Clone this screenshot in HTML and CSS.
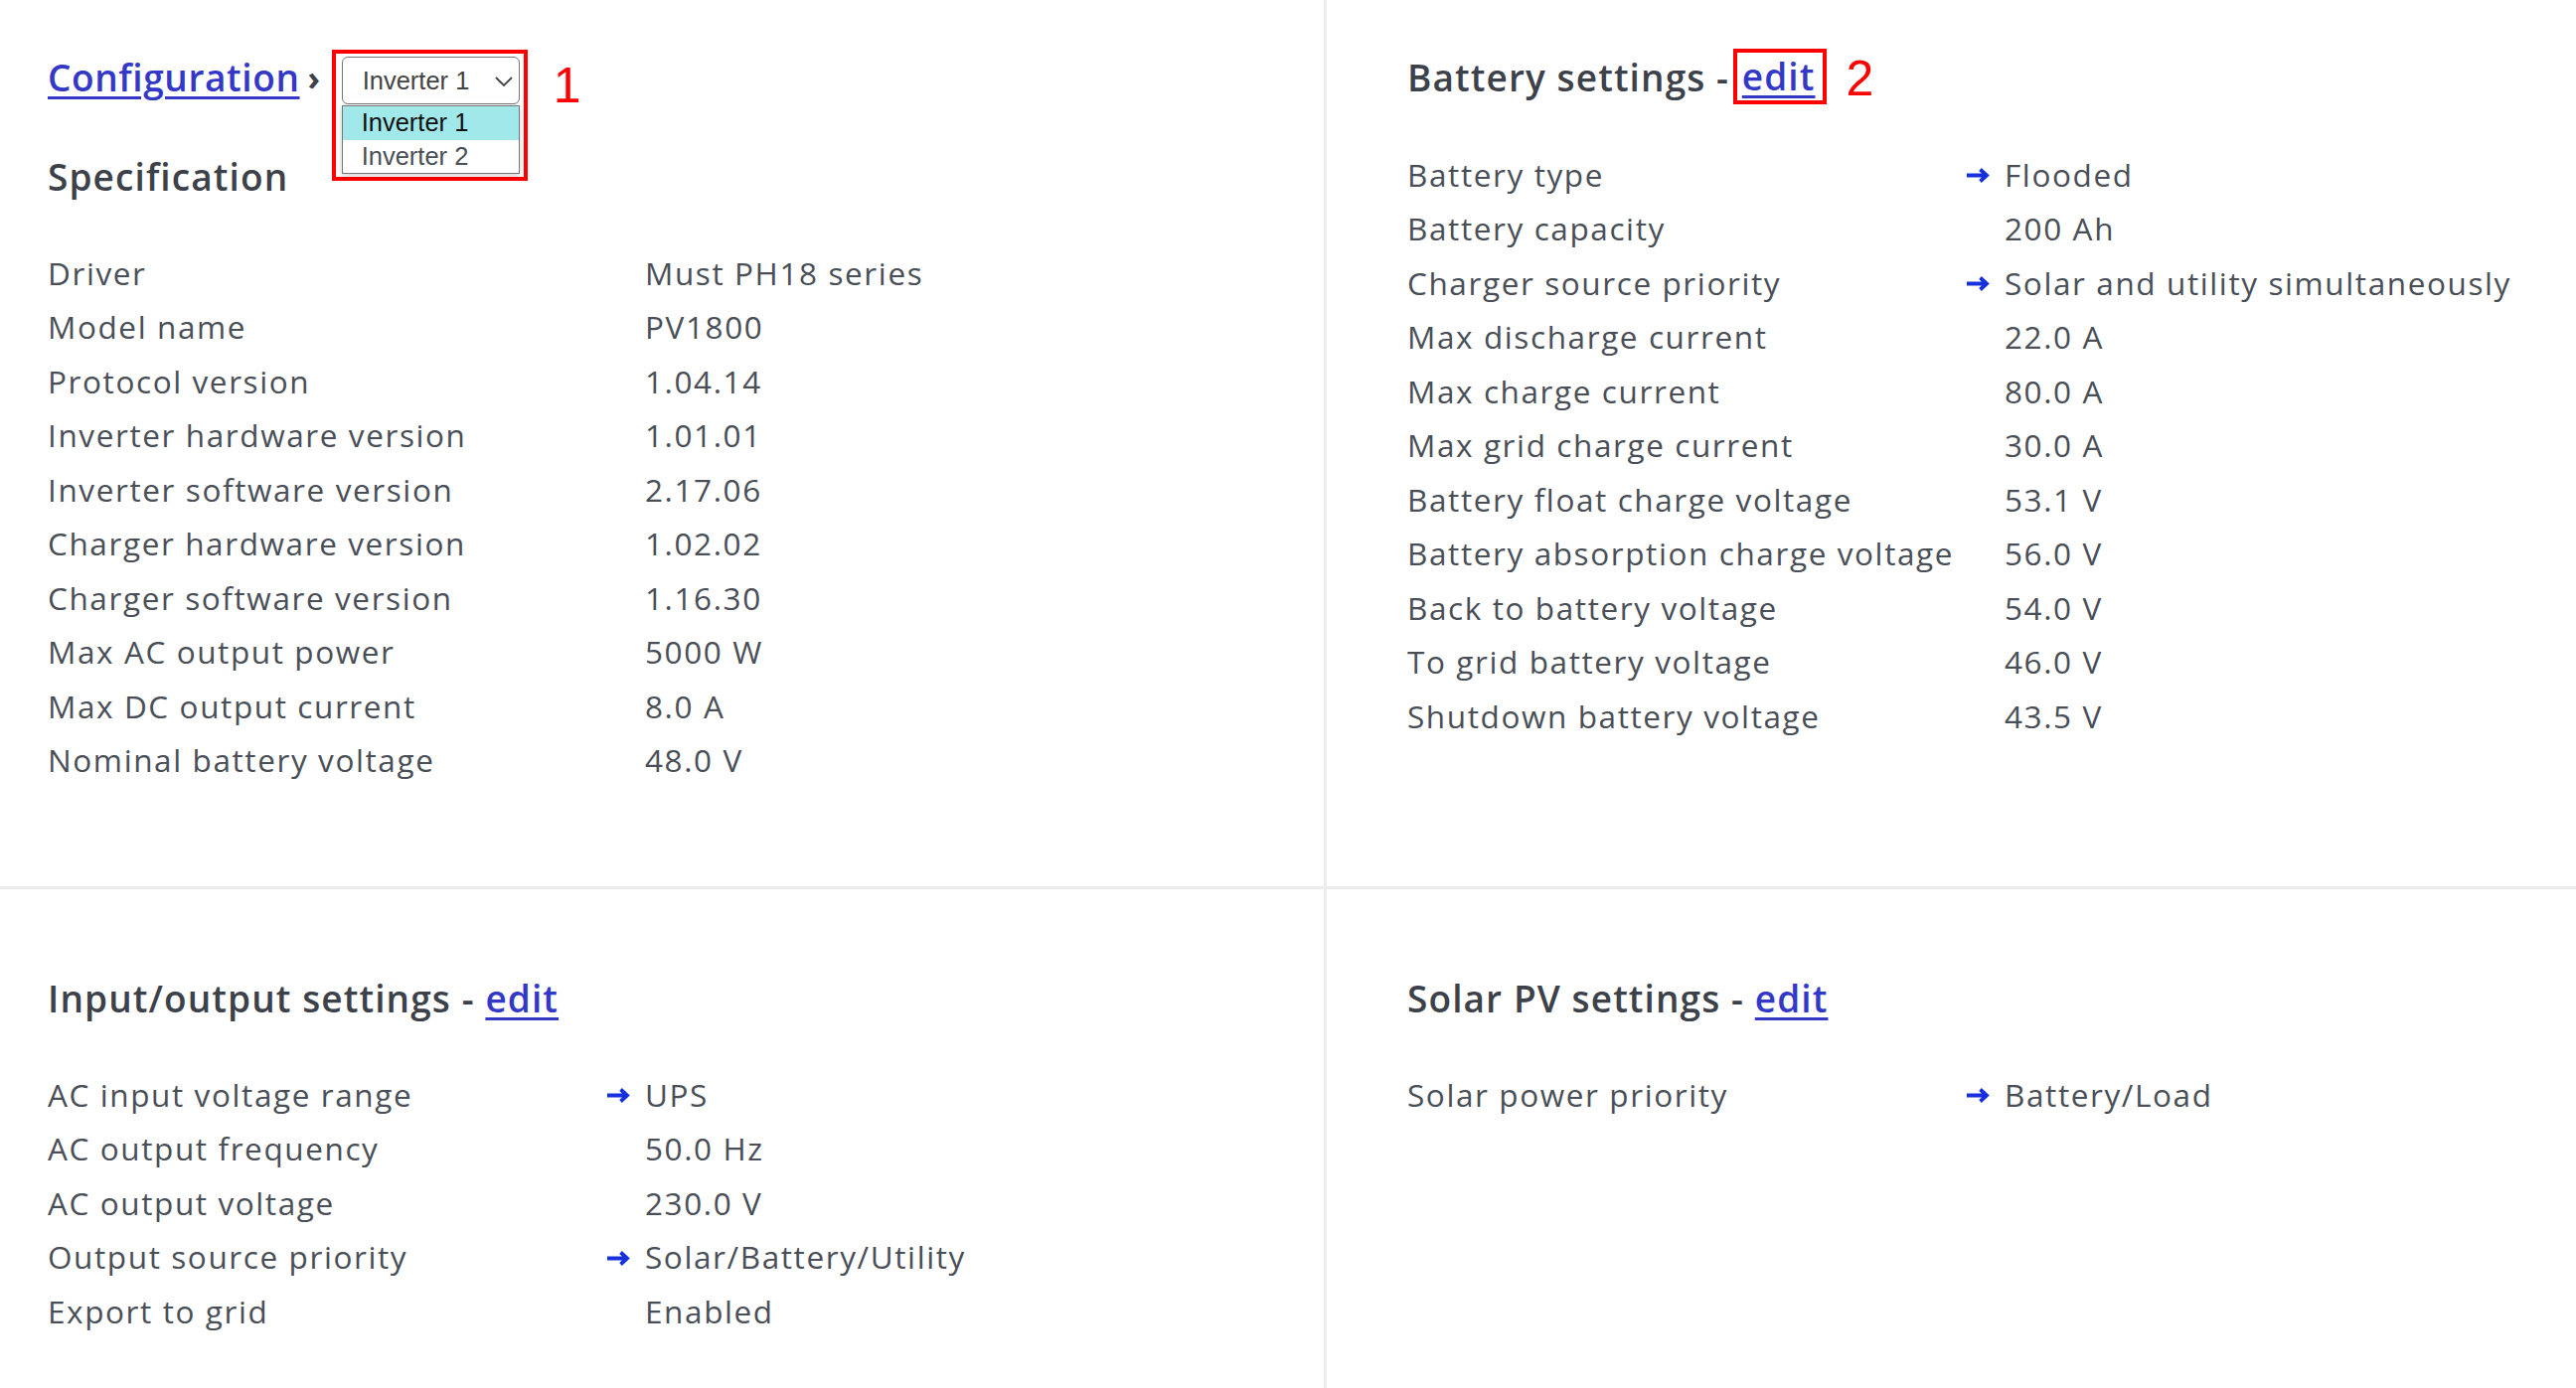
FILE: index.html
```html
<!DOCTYPE html>
<html lang="en">
<head>
<meta charset="utf-8">
<title>Configuration</title>
<link rel="stylesheet" href="styles.css">
</head>
<body>
<div class="grid">
  <section class="cell cell-top cell-left">
    <div class="crumbs">
      <a class="link crumb-link" href="#">Configuration</a>
      <span class="sep">›</span>
      <div class="annot annot-pick">
        <div class="select">
          <span>Inverter 1</span>
          <svg class="chev" viewBox="0 0 18 10" width="18" height="10"><path d="M1 1 L9 9 L17 1" fill="none" stroke="#444" stroke-width="1.8"/></svg>
        </div>
        <div class="listbox">
          <div class="opt opt-sel">Inverter 1</div>
          <div class="opt">Inverter 2</div>
        </div>
      </div>
      <span class="mark mark-1">1</span>
    </div>
    <h2 class="title">Specification</h2>
    <div class="kv">
      <div class="k">Driver</div><div class="a"></div><div class="v">Must PH18 series</div>
      <div class="k">Model name</div><div class="a"></div><div class="v">PV1800</div>
      <div class="k">Protocol version</div><div class="a"></div><div class="v">1.04.14</div>
      <div class="k">Inverter hardware version</div><div class="a"></div><div class="v">1.01.01</div>
      <div class="k">Inverter software version</div><div class="a"></div><div class="v">2.17.06</div>
      <div class="k">Charger hardware version</div><div class="a"></div><div class="v">1.02.02</div>
      <div class="k">Charger software version</div><div class="a"></div><div class="v">1.16.30</div>
      <div class="k">Max AC output power</div><div class="a"></div><div class="v">5000 W</div>
      <div class="k">Max DC output current</div><div class="a"></div><div class="v">8.0 A</div>
      <div class="k">Nominal battery voltage</div><div class="a"></div><div class="v">48.0 V</div>
    </div>
  </section>

  <section class="cell cell-top cell-right">
    <div class="head-row">
      <h2 class="title">Battery settings - <span class="annot annot-edit"><a class="link" href="#">edit</a></span></h2>
      <span class="mark mark-2">2</span>
    </div>
    <div class="kv">
      <div class="k">Battery type</div><div class="a"><svg class="arrow" viewBox="0 0 24 15" width="24" height="15"><path d="M0 7.5 H20 M13.5 1.5 L20 7.5 L13.5 13.5" fill="none" stroke="#1530dc" stroke-width="3.8"/></svg></div><div class="v">Flooded</div>
      <div class="k">Battery capacity</div><div class="a"></div><div class="v">200 Ah</div>
      <div class="k">Charger source priority</div><div class="a"><svg class="arrow" viewBox="0 0 24 15" width="24" height="15"><path d="M0 7.5 H20 M13.5 1.5 L20 7.5 L13.5 13.5" fill="none" stroke="#1530dc" stroke-width="3.8"/></svg></div><div class="v">Solar and utility simultaneously</div>
      <div class="k">Max discharge current</div><div class="a"></div><div class="v">22.0 A</div>
      <div class="k">Max charge current</div><div class="a"></div><div class="v">80.0 A</div>
      <div class="k">Max grid charge current</div><div class="a"></div><div class="v">30.0 A</div>
      <div class="k">Battery float charge voltage</div><div class="a"></div><div class="v">53.1 V</div>
      <div class="k">Battery absorption charge voltage</div><div class="a"></div><div class="v">56.0 V</div>
      <div class="k">Back to battery voltage</div><div class="a"></div><div class="v">54.0 V</div>
      <div class="k">To grid battery voltage</div><div class="a"></div><div class="v">46.0 V</div>
      <div class="k">Shutdown battery voltage</div><div class="a"></div><div class="v">43.5 V</div>
    </div>
  </section>

  <section class="cell cell-bottom cell-left">
    <h2 class="title">Input/output settings - <a class="link" href="#">edit</a></h2>
    <div class="kv">
      <div class="k">AC input voltage range</div><div class="a"><svg class="arrow" viewBox="0 0 24 15" width="24" height="15"><path d="M0 7.5 H20 M13.5 1.5 L20 7.5 L13.5 13.5" fill="none" stroke="#1530dc" stroke-width="3.8"/></svg></div><div class="v">UPS</div>
      <div class="k">AC output frequency</div><div class="a"></div><div class="v">50.0 Hz</div>
      <div class="k">AC output voltage</div><div class="a"></div><div class="v">230.0 V</div>
      <div class="k">Output source priority</div><div class="a"><svg class="arrow" viewBox="0 0 24 15" width="24" height="15"><path d="M0 7.5 H20 M13.5 1.5 L20 7.5 L13.5 13.5" fill="none" stroke="#1530dc" stroke-width="3.8"/></svg></div><div class="v">Solar/Battery/Utility</div>
      <div class="k">Export to grid</div><div class="a"></div><div class="v">Enabled</div>
    </div>
  </section>

  <section class="cell cell-bottom cell-right">
    <h2 class="title">Solar PV settings - <a class="link" href="#">edit</a></h2>
    <div class="kv">
      <div class="k">Solar power priority</div><div class="a"><svg class="arrow" viewBox="0 0 24 15" width="24" height="15"><path d="M0 7.5 H20 M13.5 1.5 L20 7.5 L13.5 13.5" fill="none" stroke="#1530dc" stroke-width="3.8"/></svg></div><div class="v">Battery/Load</div>
    </div>
  </section>
</div>
</body>
</html>
```

FILE: styles.css
```css
* { box-sizing: border-box; }
html, body {
  margin: 0;
  padding: 0;
  background: #ffffff;
}
body {
  font-family: "Open Sans", "DejaVu Sans", sans-serif;
  font-size: 31.5px;
  letter-spacing: 1.6px;
  color: #4a4f57;
  height: 1397px;
  overflow: hidden;
}
.grid {
  display: grid;
  grid-template-columns: 1332px 1fr;
  grid-template-rows: 892px 1fr;
  gap: 3px;
  background: #ececec;
  height: 1397px;
}
.cell {
  background: #ffffff;
}
.cell-left { padding-left: 48px; }
.cell-right { padding-left: 81px; }
.cell-top { padding-top: 48px; }
.cell-bottom { padding-top: 80px; }

.title {
  margin: 0 0 39px 0;
  height: 60px;
  line-height: 60px;
  font-size: 37px;
  font-weight: 600;
  color: #3d4149;
  letter-spacing: 1.1px;
  white-space: nowrap;
}
.link {
  color: #3338c6;
  text-decoration: underline;
  text-decoration-thickness: 3px;
  text-underline-offset: 5px;
}

.crumbs {
  display: flex;
  align-items: flex-start;
  height: 60px;
  margin-bottom: 40px;
}
.crumb-link {
  font-size: 37px;
  font-weight: 600;
  line-height: 60px;
  letter-spacing: 0.6px;
}
.sep {
  line-height: 60px;
  font-size: 34px;
  font-weight: 700;
  color: #3d4149;
  margin: 0 10px 0 8px;
}
.annot {
  border: 4px solid #ff0000;
}
.annot-pick {
  margin-top: 2px;
  padding: 3px 4px 3px 6px;
  font-family: "Liberation Sans", Arial, sans-serif;
  letter-spacing: 0;
  flex: none;
}
.select {
  width: 179px;
  height: 48px;
  border: 1.5px solid #767676;
  border-radius: 6px;
  display: flex;
  align-items: center;
  justify-content: space-between;
  padding: 0 6px 0 20px;
  font-size: 25.5px;
  color: #444;
  background: #fff;
}
.chev { display: block; margin-top: 2px; }
.listbox {
  width: 179px;
  margin-top: 1px;
  border: 1.5px solid #767676;
  background: #fff;
  box-shadow: 0 2px 6px rgba(0,0,0,0.18);
  padding: 0;
}
.opt {
  height: 33.5px;
  line-height: 33.5px;
  padding-left: 19px;
  font-size: 25.5px;
  color: #4a4f57;
}
.opt-sel {
  background: #a0e8ea;
  color: #111;
}
.mark {
  font-family: "Liberation Sans", Arial, sans-serif;
  color: #ff0000;
  font-size: 50px;
  letter-spacing: 0;
  line-height: 60px;
}
.mark-1 { margin-left: 26px; margin-top: 8px; }

.head-row {
  display: flex;
  align-items: flex-start;
  margin-bottom: 39px;
}
.head-row .title { margin-bottom: 0; }
.annot-edit {
  display: inline-block;
  line-height: 48px;
  padding: 0 7px 0 5px;
  margin-left: -7px;
  vertical-align: 1px;
}
.mark-2 { margin-left: 20px; margin-top: 1px; }

.kv {
  display: grid;
  grid-template-columns: 563px 38px auto;
  grid-auto-rows: 54.5px;
  align-items: center;
  white-space: nowrap;
}
.a { display: flex; align-items: center; height: 100%; padding-top: 3px; }
.arrow { display: block; }
```
